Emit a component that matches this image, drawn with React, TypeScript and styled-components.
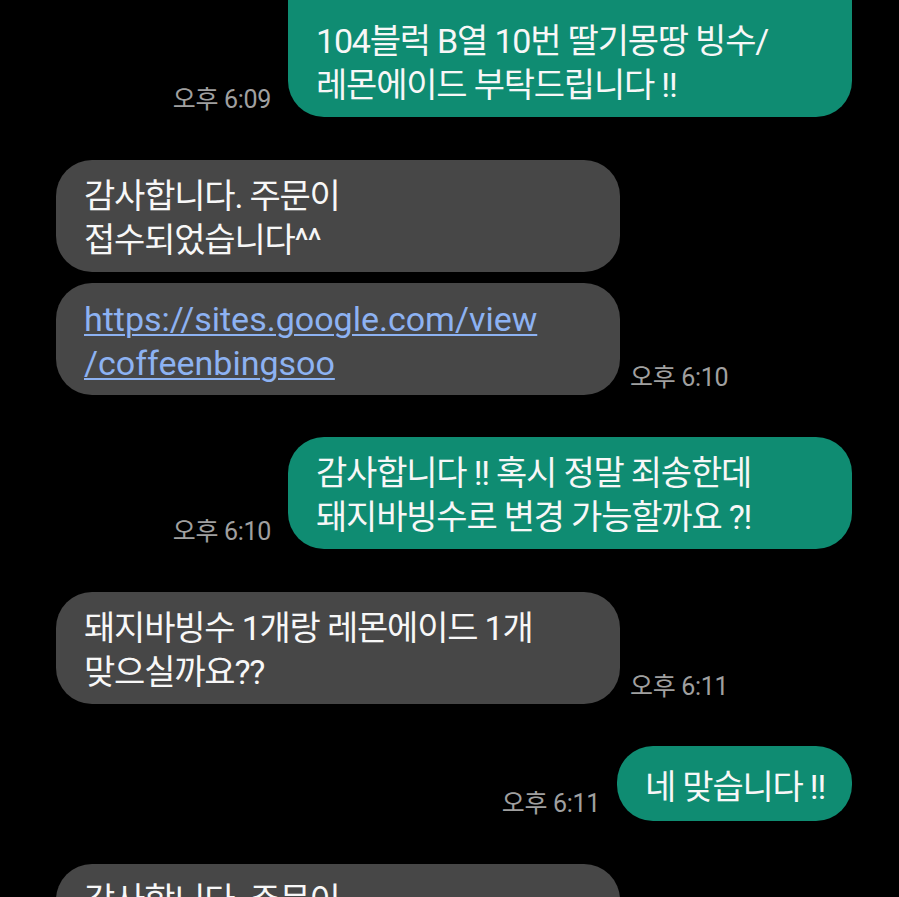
import styled, { createGlobalStyle } from 'styled-components'

const GlobalStyle = createGlobalStyle`
    html, body {
        margin: 0;
        padding: 0;
        background: #000;
    }
    body {
        font-family: Roboto, "Noto Sans CJK KR", sans-serif;
        overflow: hidden;
    }
`;

const Screen = styled.div`
    width: 899px;
    height: 897px;
    background: #000;
    overflow: hidden;
`;

const Thread = styled.div`
    display: flex;
    flex-direction: column;
    padding: 0 47px 0 56px;
`;

const Group = styled.div<{ $mine?: boolean }>`
    display: flex;
    flex-direction: column;
    align-items: ${(p) => (p.$mine ? 'flex-end' : 'flex-start')};
    gap: 11px;
    margin-bottom: 42.5px;
`;

const Row = styled.div<{ $mine?: boolean }>`
    display: flex;
    flex-direction: ${(p) => (p.$mine ? 'row-reverse' : 'row')};
    align-items: flex-end;
    gap: ${(p) => (p.$mine ? '17px' : '10px')};
`;

const Bubble = styled.div<{ $mine?: boolean; $wide?: boolean; $cut?: boolean }>`
    box-sizing: border-box;
    width: ${(p) => (p.$wide ? '564px' : 'auto')};
    padding: ${(p) => (p.$cut ? '74px' : p.$wide ? '14px' : '19px')} 27px
        ${(p) => (p.$wide ? '10px' : '12px')} 28px;
    margin-top: ${(p) => (p.$cut ? '-55px' : '0')};
    border-radius: 36px;
    background: ${(p) => (p.$mine ? '#0f8c72' : '#474747')};
    color: #f7f7f7;
    font-size: 34px;
    line-height: 44px;
    letter-spacing: -1.2px;
    white-space: nowrap;
`;

const Link = styled.span`
    color: #8db2f2;
    text-decoration: underline;
    text-decoration-thickness: 2px;
    text-underline-offset: 3px;
    letter-spacing: 0;
`;

const Time = styled.span`
    font-size: 25px;
    line-height: 30px;
    color: #a0a0a0;
    letter-spacing: -0.3px;
    margin-bottom: 2px;
    white-space: nowrap;
`;

interface Message {
    lines: string[]
    link?: boolean
}

interface Block {
    mine: boolean
    time: string
    messages: Message[]
}

const blocks: Block[] = [
    {
        mine: true,
        time: '오후 6:09',
        messages: [{ lines: ['104블럭 B열 10번 딸기몽땅 빙수/', '레몬에이드 부탁드립니다 !!'] }],
    },
    {
        mine: false,
        time: '오후 6:10',
        messages: [
            { lines: ['감사합니다. 주문이', '접수되었습니다^^'] },
            { lines: ['https://sites.google.com/view', '/coffeenbingsoo'], link: true },
        ],
    },
    {
        mine: true,
        time: '오후 6:10',
        messages: [{ lines: ['감사합니다 !! 혹시 정말 죄송한데', '돼지바빙수로 변경 가능할까요 ?!'] }],
    },
    {
        mine: false,
        time: '오후 6:11',
        messages: [{ lines: ['돼지바빙수 1개랑 레몬에이드 1개', '맞으실까요??'] }],
    },
    {
        mine: true,
        time: '오후 6:11',
        messages: [{ lines: ['네 맞습니다 !!'] }],
    },
    {
        mine: false,
        time: '오후 6:11',
        messages: [{ lines: ['감사합니다. 주문이', '접수되었습니다^^'] }],
    },
];

const App = () => {
    return (
        <Screen>
            <GlobalStyle />
            <Thread>
                {blocks.map((block, bi) => (
                    <Group key={bi} $mine={block.mine}>
                        {block.messages.map((msg, mi) => {
                            const last = mi === block.messages.length - 1
                            const body = msg.lines.map((line, li) => (
                                <div key={li}>{msg.link ? <Link>{line}</Link> : line}</div>
                            ))
                            return (
                                <Row key={mi} $mine={block.mine}>
                                    <Bubble
                                        $mine={block.mine}
                                        $wide={msg.lines.length > 1}
                                        $cut={bi === 0 && mi === 0}
                                    >
                                        {body}
                                    </Bubble>
                                    {last && <Time>{block.time}</Time>}
                                </Row>
                            )
                        })}
                    </Group>
                ))}
            </Thread>
        </Screen>
    );
};

export default App;
